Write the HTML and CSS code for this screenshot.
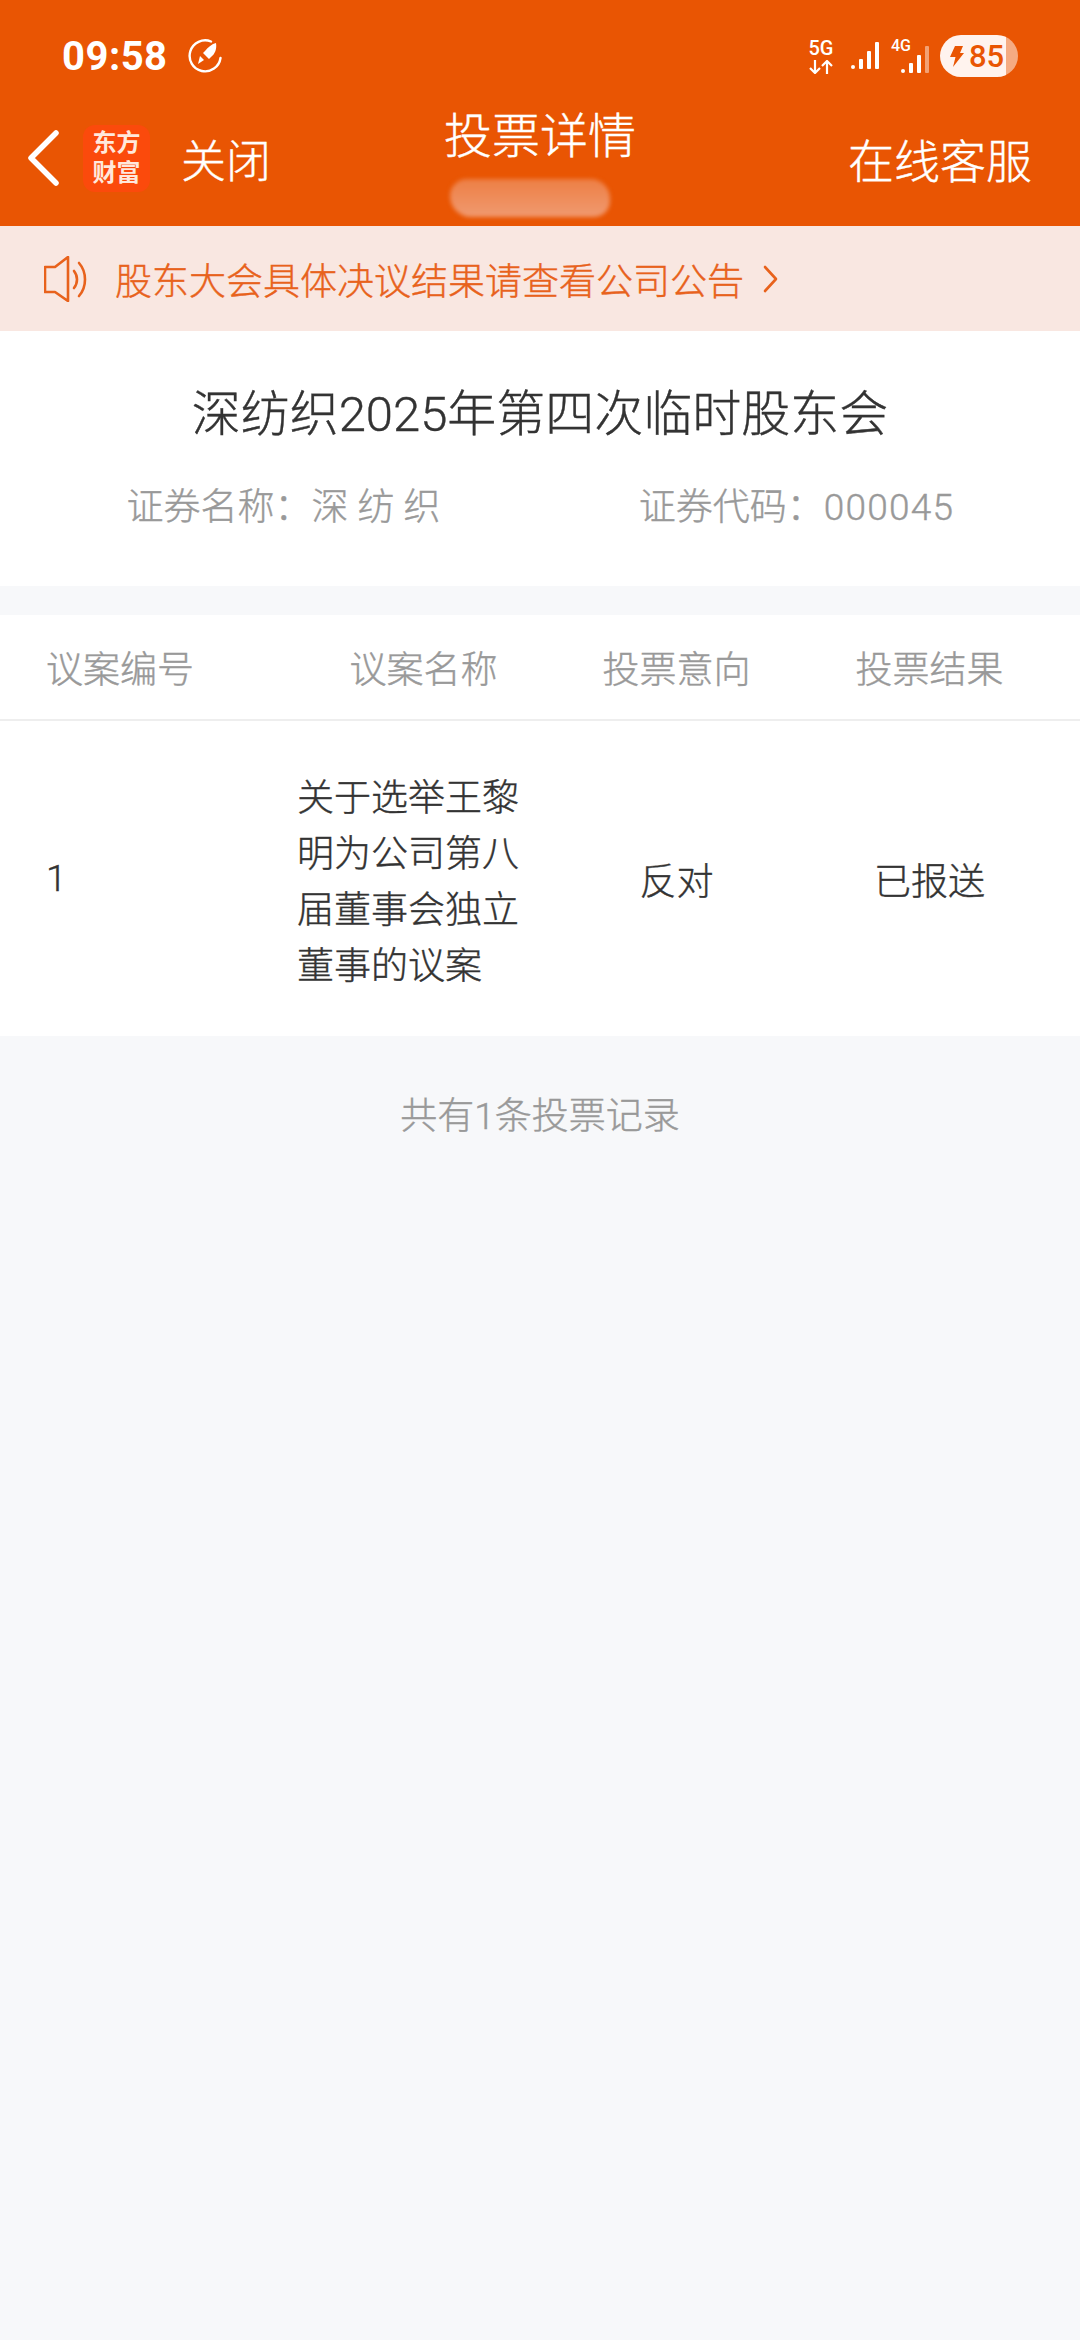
FILE: index.html
```html
<!DOCTYPE html>
<html lang="zh-CN">
<head>
  <meta charset="UTF-8">
  <meta name="viewport" content="width=device-width, initial-scale=1.0">
  <title>投票详情</title>
  <link rel="stylesheet" href="styles.css">
</head>
<body>
  <header class="top">
    <div class="status-bar">
      <div class="status-left">
        <span class="clock">09:58</span>
        <svg class="rocket" viewBox="0 0 36 36" xmlns="http://www.w3.org/2000/svg">
          <path d="M24 3.500A15.500 15.500 0 1 0 33.500 20" fill="none" stroke="#fff" stroke-width="2.400" stroke-linecap="round"/>
          <path d="M29 5c1 6-1 11-5 14l-2 2-6-6 2-2c3-4 7-7 11-8z" fill="#fff"/>
          <path d="M13 18l4 4-6 4z" fill="#fff"/>
        </svg>
      </div>
      <div class="status-right">
        <div class="net-type">
          <span>5G</span>
          <svg class="net-arrows" viewBox="0 0 26 14" xmlns="http://www.w3.org/2000/svg">
            <path d="M7 0v12M2 8l5 5 5-5M19 14V2M14 6l5-5 5 5" fill="none" stroke="#fff" stroke-width="2.200"/>
          </svg>
        </div>
        <svg class="signal" viewBox="0 0 30 30" xmlns="http://www.w3.org/2000/svg">
          <rect x="1" y="24" width="4" height="4" rx="2" fill="#fff"/>
          <rect x="9" y="18" width="4" height="10" rx="1" fill="#fff"/>
          <rect x="17" y="10" width="4" height="18" rx="1" fill="#fff"/>
          <rect x="25" y="1" width="4" height="27" rx="1" fill="#fff"/>
        </svg>
        <div class="signal-4g">
          <span>4G</span>
          <svg class="signal" viewBox="0 0 30 30" xmlns="http://www.w3.org/2000/svg">
            <rect x="1" y="24" width="4" height="4" rx="2" fill="#fff"/>
            <rect x="9" y="18" width="4" height="10" rx="1" fill="#fff"/>
            <rect x="17" y="10" width="4" height="18" rx="1" fill="#fff"/>
            <rect x="25" y="1" width="4" height="27" rx="1" fill="#fff" fill-opacity="0.45"/>
          </svg>
        </div>
        <div class="battery">
          <svg class="bolt" viewBox="0 0 15 21" xmlns="http://www.w3.org/2000/svg">
            <path d="M6 0h8l-3 7h4L4 21l2.500-10H1z" fill="#e95503"/>
          </svg>
          <span>85</span>
        </div>
      </div>
    </div>

    <nav class="nav">
      <div class="nav-left">
        <svg class="back" viewBox="0 0 34 58" xmlns="http://www.w3.org/2000/svg">
          <path d="M30 4L5 29l25 25" fill="none" stroke="#fff" stroke-width="5.500" stroke-linecap="round" stroke-linejoin="round"/>
        </svg>
        <div class="logo">东方<br>财富</div>
        <span class="close">关闭</span>
      </div>
      <div class="nav-title">
        <h1>投票详情</h1>
        <div class="account-mask"></div>
      </div>
      <div class="nav-right">在线客服</div>
    </nav>
  </header>

  <div class="notice">
    <svg class="horn" viewBox="0 0 46 46" xmlns="http://www.w3.org/2000/svg">
      <path d="M1 11h10L24 1v44L11 36H1z" fill="none" stroke="#e8621c" stroke-width="2.600" stroke-linejoin="round"/>
      <path d="M30 15c4 5 4 12 0 17M35 7c8 9 8 24 0 33" fill="none" stroke="#e8621c" stroke-width="2.600" stroke-linecap="round"/>
    </svg>
    <span>股东大会具体决议结果请查看公司公告</span>
    <svg class="chevron" viewBox="0 0 16 28" xmlns="http://www.w3.org/2000/svg">
      <path d="M3 2l11 12L3 26" fill="none" stroke="#e8621c" stroke-width="2.600" stroke-linecap="round" stroke-linejoin="round"/>
    </svg>
  </div>

  <section class="meeting">
    <h2>深纺织2025年第四次临时股东会</h2>
    <div class="meeting-meta">
      <span>证券名称&#65306;深 纺 织</span>
      <span>证券代码&#65306;<span class="stock-code">000045</span></span>
    </div>
  </section>

  <section class="votes">
    <div class="votes-row votes-head">
      <div class="col-no">议案编号</div>
      <div class="col-mid">议案名称</div>
      <div class="col-mid">投票意向</div>
      <div class="col-mid">投票结果</div>
    </div>
    <div class="votes-row votes-item">
      <div class="col-no">1</div>
      <div class="col-name">关于选举王黎明为公司第八届董事会独立董事的议案</div>
      <div class="col-mid">反对</div>
      <div class="col-mid">已报送</div>
    </div>
  </section>

  <p class="total">共有1条投票记录</p>
</body>
</html>
```

FILE: styles.css
```css
* {
  margin: 0;
  padding: 0;
  box-sizing: border-box;
}

html, body {
  height: 100%;
}

body {
  font-family: Roboto, "Noto Sans CJK SC", sans-serif;
  font-weight: 300;
  -webkit-text-stroke: 0.4px;
  background-color: #f7f8fa;
  color: #333;
  overflow: hidden;
}

/* orange header: system bar + nav */
.top {
  height: 226px;
  background-color: #e95503;
  color: #fff;
}

.status-bar {
  height: 112px;
  padding: 33px 62px 0 62px;
  display: flex;
  justify-content: space-between;
  align-items: flex-start;
  -webkit-text-stroke: 0;
}

.status-left {
  display: flex;
  align-items: center;
  gap: 19px;
  height: 46px;
}

.clock {
  font-size: 40px;
  font-weight: 700;
  letter-spacing: 0.5px;
}

.rocket {
  width: 36px;
  height: 36px;
}

.status-right {
  display: flex;
  align-items: center;
  height: 46px;
}

.net-type {
  width: 26px;
  display: flex;
  flex-direction: column;
  align-items: center;
  font-size: 20px;
  font-weight: 500;
  line-height: 19px;
}

.net-arrows {
  width: 26px;
  height: 14px;
  margin-top: 2px;
}

.signal {
  width: 30px;
  height: 30px;
  margin-left: 16px;
}

.signal-4g {
  position: relative;
  width: 38px;
  height: 46px;
  margin-left: 11px;
}

.signal-4g span {
  position: absolute;
  left: 0;
  top: 5px;
  font-size: 16px;
  font-weight: 500;
  line-height: 16px;
}

.signal-4g .signal {
  position: absolute;
  right: -1px;
  bottom: 4px;
}

.battery {
  width: 78px;
  height: 42px;
  margin-left: 11px;
  border-radius: 21px;
  background: linear-gradient(to right, #fff3ee 0, #fff3ee 66px, #f5ab82 66px);
  color: #e95503;
  display: flex;
  align-items: center;
  padding-left: 9px;
  gap: 5px;
  font-size: 31px;
  font-weight: 500;
}

.bolt {
  width: 15px;
  height: 21px;
}

.nav {
  height: 114px;
  padding: 0 48px 0 26px;
  display: grid;
  grid-template-columns: 1fr 200px 1fr;
}

.nav-left {
  display: flex;
  align-items: center;
  height: 64px;
  margin-top: 14px;
}

.back {
  width: 34px;
  height: 58px;
}

.logo {
  width: 67px;
  height: 67px;
  margin-left: 23px;
  border-radius: 12px;
  background-color: #fb4a0c;
  color: #ffe8dc;
  font-size: 24px;
  font-weight: 700;
  line-height: 30px;
  text-align: center;
  padding-top: 3px;
  flex-shrink: 0;
  -webkit-text-stroke: 0;
}

.close {
  margin-left: 31px;
  padding-top: 10px;
  font-size: 45px;
  line-height: 64px;
}

/* grid centre sits left of the window centre because of the uneven padding */
.nav-title {
  text-align: center;
  margin-left: 11px;
  margin-right: -11px;
}

h1 {
  font-size: 48px;
  font-weight: 300;
  line-height: 50px;
}

.account-mask {
  width: 160px;
  height: 38px;
  margin: 17px 0 0 10px;
  border-radius: 19px 22px 18px 24px;
  background: linear-gradient(to bottom, #ed7f45, #f09a70);
  filter: blur(2px);
}

.nav-right {
  font-size: 46px;
  line-height: 64px;
  margin-top: 18px;
  text-align: right;
}

/* notice strip */
.notice {
  height: 105px;
  background-color: #f9e7e1;
  color: #e8621c;
  padding-left: 44px;
  display: flex;
  align-items: center;
  font-size: 37px;
}

.horn {
  width: 46px;
  height: 46px;
  margin-right: 25px;
}

.chevron {
  width: 16px;
  height: 28px;
  margin-left: 18px;
}

/* meeting title card */
.meeting {
  height: 255px;
  background-color: #fff;
  padding-top: 48px;
}

h2 {
  font-size: 49px;
  font-weight: 300;
  line-height: 72px;
  text-align: center;
}

.meeting-meta {
  margin-top: 32px;
  display: grid;
  grid-template-columns: 1fr 1fr;
  justify-items: center;
  font-size: 37px;
  line-height: 50px;
  color: #999;
  padding: 0 27px;
}

.stock-code {
  letter-spacing: 1.2px;
}

/* vote table */
.votes {
  margin-top: 29px;
  background-color: #fff;
}

.votes-row {
  display: grid;
  grid-template-columns: repeat(4, 253px);
  padding: 0 22px 0 44px;
  align-items: center;
  font-size: 37px;
}

.votes-head {
  height: 106px;
  color: #999;
  border-bottom: 2px solid #eee;
}

.votes-item {
  height: 315px;
}

.col-no {
  padding-left: 2px;
}

.col-mid {
  text-align: center;
}

.col-name {
  width: 226px;
  padding-top: 8px;
  line-height: 56px;
}

.total {
  margin-top: 54px;
  text-align: center;
  font-size: 37px;
  line-height: 54px;
  color: #999;
}
```
